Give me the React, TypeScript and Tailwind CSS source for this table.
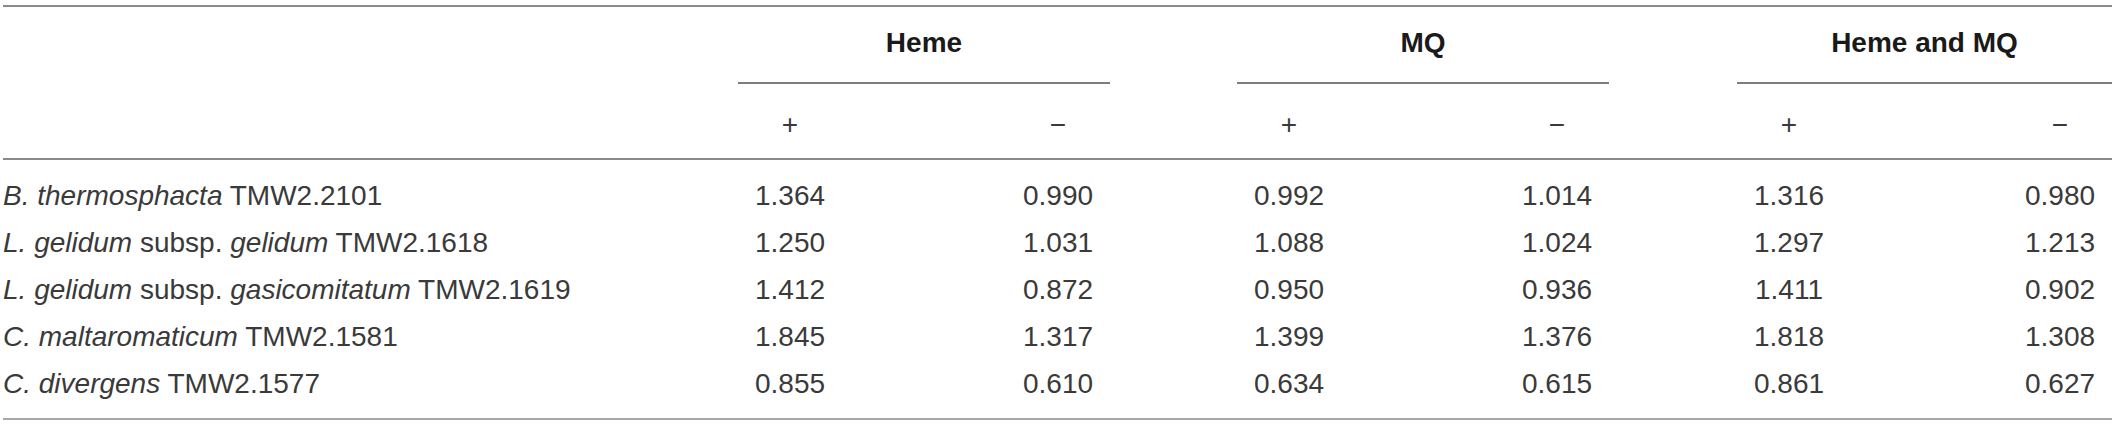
import React from "react";

const rows: { label: React.ReactNode; values: string[] }[] = [
  {
    label: (
      <>
        <i>B. thermosphacta</i> TMW2.2101
      </>
    ),
    values: ["1.364", "0.990", "0.992", "1.014", "1.316", "0.980"],
  },
  {
    label: (
      <>
        <i>L. gelidum</i> subsp. <i>gelidum</i> TMW2.1618
      </>
    ),
    values: ["1.250", "1.031", "1.088", "1.024", "1.297", "1.213"],
  },
  {
    label: (
      <>
        <i>L. gelidum</i> subsp. <i>gasicomitatum</i> TMW2.1619
      </>
    ),
    values: ["1.412", "0.872", "0.950", "0.936", "1.411", "0.902"],
  },
  {
    label: (
      <>
        <i>C. maltaromaticum</i> TMW2.1581
      </>
    ),
    values: ["1.845", "1.317", "1.399", "1.376", "1.818", "1.308"],
  },
  {
    label: (
      <>
        <i>C. divergens</i> TMW2.1577
      </>
    ),
    values: ["0.855", "0.610", "0.634", "0.615", "0.861", "0.627"],
  },
];

function Pair({ a, b, w, ml }: { a: string; b: string; w: string; ml: string }) {
  return (
    <div className={`flex justify-between px-[12px] ${w} ${ml}`}>
      <div className="w-[80px] text-center">{a}</div>
      <div className="w-[80px] text-center">{b}</div>
    </div>
  );
}

function Groups({ vals }: { vals: string[] }) {
  return (
    <>
      <Pair a={vals[0]} b={vals[1]} w="w-[372px]" ml="ml-0" />
      <Pair a={vals[2]} b={vals[3]} w="w-[372px]" ml="ml-[127px]" />
      <Pair a={vals[4]} b={vals[5]} w="w-[375px]" ml="ml-[128px]" />
    </>
  );
}

function GroupHead({ title, w, ml }: { title: string; w: string; ml: string }) {
  return (
    <div className={`flex flex-col ${w} ${ml}`}>
      <div className="h-[72px] flex items-center justify-center font-bold text-[#1a1a1a]">{title}</div>
      <div className="mt-[3px] h-[2px] bg-[#7d7d7d]" />
    </div>
  );
}

export default function App() {
  return (
    <div
      className="w-[2117px] h-[425px] bg-white pl-[3px] pr-[5px] pt-[5px] text-[28px] leading-none text-[#3a3a3a]"
      style={{ fontFamily: '"Liberation Sans", Arial, sans-serif' }}
    >
      <div className="h-[2px] bg-[#8a8a8a]" />
      <div className="flex">
        <div className="w-[735px] shrink-0" />
        <GroupHead title="Heme" w="w-[372px]" ml="ml-0" />
        <GroupHead title="MQ" w="w-[372px]" ml="ml-[127px]" />
        <GroupHead title="Heme and MQ" w="w-[375px]" ml="ml-[128px]" />
      </div>
      <div className="flex h-[74px] items-center pt-[8px]">
        <div className="w-[735px] shrink-0" />
        <Groups vals={["+", "−", "+", "−", "+", "−"]} />
      </div>
      <div className="h-[2px] bg-[#8a8a8a]" />
      <div className="pt-[12px] pb-[11px]">
        {rows.map((r, i) => (
          <div key={i} className="flex h-[47px] items-center">
            <div className="w-[735px] shrink-0 whitespace-nowrap">{r.label}</div>
            <Groups vals={r.values} />
          </div>
        ))}
      </div>
      <div className="h-[2px] bg-[#a8a8a8]" />
    </div>
  );
}
